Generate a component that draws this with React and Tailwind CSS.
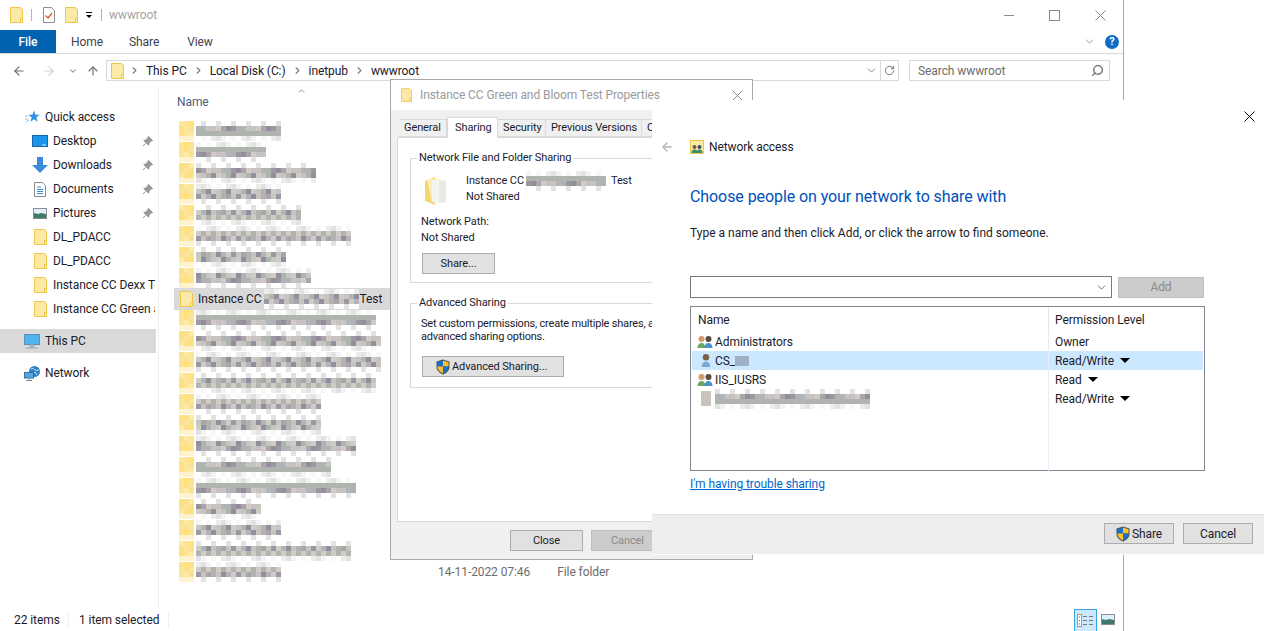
import { ChevronDown, ChevronRight, ArrowLeft, ArrowRight, ArrowUp, RotateCw, Search, ChevronUp } from 'lucide-react';

const ROWS = [
  85, 70, 120, 85, 105, 155, 90, 115, null, 180, 185, 185, 180, 125, 125, 160, 135, 160, 65, 85, 155, 85,
];
const GREYS = ['#aaa5ab', '#c6c6c0', '#9d97a3', '#d0cbc7', '#b3b3bc', '#928e9a', '#c9c1c1', '#afb4ae'];
const FRINGE = ['#f7f7f7', '#ffffff', '#ececec', '#e2e2e2', '#f3f3f6', '#ffffff'];
const YELLOWS = ['#fde9a4', '#fbe08e', '#ffe27a', '#fde597'];

// pseudo random but stable, so the blur looks the same every run
function pick(list, a, b) {
  return list[(a * 7 + b * 13 + a * b * 3) % list.length];
}

function Mosaic({ width, seed = 1, cell = 5 }) {
  const cols = Math.round(width / cell);
  const bands = [FRINGE, GREYS, GREYS, FRINGE];
  return (
    <div className="flex flex-col shrink-0">
      {bands.map((band, r) => (
        <div key={r} className="flex">
          {Array.from({ length: cols }).map((_, c) => (
            <div key={c} style={{ width: cell, height: cell, backgroundColor: pick(band, c + seed, r + seed) }} />
          ))}
        </div>
      ))}
    </div>
  );
}

function BlurFolder({ seed }) {
  return (
    <div className="flex flex-col shrink-0">
      {[0, 1, 2, 3].map((r) => (
        <div key={r} className="flex">
          {[0, 1, 2].map((c) => (
            <div key={c} style={{ width: 5, height: 5, backgroundColor: r === 3 ? '#fdf3cf' : pick(YELLOWS, c + seed, r) }} />
          ))}
        </div>
      ))}
    </div>
  );
}

function Cross({ color = '#8a8a8a' }) {
  return (
    <svg viewBox="0 0 11 11" className="w-[11px] h-[11px] shrink-0" stroke={color}>
      <path d="M.5.5l10 10M10.500.5l-10 10" />
    </svg>
  );
}

function Folder({ className = 'w-[13px] h-[16px]' }) {
  return (
    <svg viewBox="0 0 13 16" className={className}>
      <path d="M.5.5h9.500l2.500 2v13H.5z" fill="#fde9a6" stroke="#eec64a" />
      <path d="M10.500 11.500h2v4h-2z" fill="#fff3c9" stroke="#eec64a" />
    </svg>
  );
}

function Shield() {
  return (
    <svg viewBox="0 0 14 16" className="w-[14px] h-[16px] shrink-0">
      <path d="M7 .5 13.500 2.500V8c0 3.500-3 6-6.500 7.500C3.500 14 .5 11.500.5 8V2.500z" fill="#4a5560" />
      <path d="M7 1.500v6H1.500V3.200z" fill="#1673cc" />
      <path d="M7 1.500l5.500 1.700v4.300H7z" fill="#fbc02d" />
      <path d="M1.500 7.500H7v6.800C4 13 1.500 11 1.500 7.500z" fill="#fbc02d" />
      <path d="M7 7.500h5.500c0 3.500-2.500 5.500-5.500 6.800z" fill="#1673cc" />
    </svg>
  );
}

function Person({ color = '#3f7fbf', head = '#8a6a4a', x = 0 }) {
  return (
    <g transform={`translate(${x} 0)`}>
      <circle cx="4.500" cy="4" r="3" fill={head} />
      <path d="M.5 13c0-3 1.500-5 4-5s4 2 4 5z" fill={color} />
    </g>
  );
}

function UserIcon({ group }) {
  if (group) {
    return (
      <svg viewBox="0 0 17 14" className="w-[17px] h-[14px] shrink-0">
        <Person color="#6aa85f" head="#d49a6a" x={0} />
        <Person color="#4a8fd0" head="#5a4a42" x={7} />
      </svg>
    );
  }
  return (
    <svg viewBox="0 0 9 14" className="w-[10px] h-[15px] shrink-0">
      <Person color="#7ba7d4" head="#7a6048" />
    </svg>
  );
}

function Pin() {
  return (
    <svg viewBox="0 0 12 12" className="w-[11px] h-[11px]">
      <path d="M7 .5 11.500 5 9.500 5.700 7.500 8l-.3 2L2 4.800l2-.3L6.300 2.500zM4 8 1 11" fill="#9a9a9a" stroke="#8a8a8a" />
    </svg>
  );
}

function StarIcon() {
  return (
    <svg viewBox="0 0 15 14" className="w-[15px] h-[14px]">
      <path d="M9 .5l1.500 4.300h4.200l-3.400 2.600 1.300 4.400L9 9.300 5.400 11.800l1.300-4.400-3.400-2.600h4.200z" fill="#2f8fe0" />
      <path d="M0 6h3M0 9h3M1 12l3-2" stroke="#8cc4f0" />
    </svg>
  );
}

function DesktopIcon() {
  return (
    <svg viewBox="0 0 16 12" className="w-[16px] h-[12px]">
      <rect x=".5" y=".5" width="15" height="11" fill="#1a95ea" stroke="#1668a8" />
      <path d="M10 10h4" stroke="#d7eefc" />
    </svg>
  );
}

function DownloadIcon() {
  return (
    <svg viewBox="0 0 16 16" className="w-[16px] h-[16px]">
      <path d="M5 0h6v8h5l-8 8-8-8h5z" fill="#3b8ddc" />
    </svg>
  );
}

function DocIcon() {
  return (
    <svg viewBox="0 0 12 15" className="w-[12px] h-[15px]">
      <path d="M.5.5h8l3 3v11H.5z" fill="#fff" stroke="#8a8a8a" />
      <path d="M3 5h4M3 7.500h6M3 9.500h6M3 11.500h6" stroke="#3a8ad0" />
    </svg>
  );
}

function PictureIcon() {
  return (
    <svg viewBox="0 0 14 11" className="w-[14px] h-[11px]">
      <rect x=".5" y=".5" width="13" height="10" fill="#dff0fa" stroke="#8a8f96" />
      <path d="M1 5l4 1 3-1 5 1v4H1z" fill="#3d7a6a" />
    </svg>
  );
}

function PcIcon() {
  return (
    <svg viewBox="0 0 16 15" className="w-[16px] h-[15px]">
      <rect x=".5" y=".5" width="15" height="10" fill="#4fb4ef" stroke="#5a8fb8" />
      <path d="M6 11h4v2H6zM2 14h12" stroke="#8fa9bd" fill="#c7d6e0" />
    </svg>
  );
}

function NetworkIcon() {
  return (
    <svg viewBox="0 0 16 15" className="w-[16px] h-[15px]">
      <circle cx="10.500" cy="5.500" r="5.500" fill="#2f82c9" />
      <path d="M7 3c2-1 3 0 4 1s3 0 4 0M9 8l2-2 2 3" stroke="#bfe3f7" fill="none" />
      <rect x=".5" y="6.500" width="9" height="5.500" fill="#52a9e3" stroke="#34709e" />
      <path d="M5 12v2M2 14.500h6" stroke="#6f8fa8" />
    </svg>
  );
}

function TitleDoc() {
  return (
    <svg viewBox="0 0 12 16" className="w-[12px] h-[16px]">
      <path d="M.5.5h8l3 3v12H.5z" fill="#fff" stroke="#8f8f8f" />
      <path d="M2.500 8.500l2.500 2.500 4-5" stroke="#e0562a" strokeWidth="1.300" fill="none" />
    </svg>
  );
}

function DetailsViewIcon() {
  return (
    <svg viewBox="0 0 17 13" className="w-[17px] h-[13px]">
      <rect x=".5" y=".5" width="4" height="12" fill="#fff" stroke="#9a9a9a" />
      <path d="M2 3h1M2 6.500h1" stroke="#555" />
      <path d="M2 10h1" stroke="#c0392b" />
      <path d="M6 2.500h4M12 2.500h4M6 6.500h4M12 6.500h4M6 10.500h4M12 10.500h4" stroke="#777" />
    </svg>
  );
}

function SharedFolder() {
  return (
    <svg viewBox="0 0 24 30" className="w-[24px] h-[30px]">
      <path d="M1 5 11 1v28L1 25z" fill="#f7d671" />
      <path d="M3 3h14v23H8z" fill="#fdeeb7" />
      <path d="M8 4h14v23H11l-3-2z" fill="#f3f3f1" />
      <path d="M15 5h7v21h-7z" fill="#e8e8e4" />
    </svg>
  );
}

function NavItem({ icon, label, pinned, indent = 'pl-[32px]' }) {
  return (
    <div className={`h-[24px] flex items-center ${indent} pr-[3px] overflow-hidden`}>
      <span className="w-[16px] mr-[5px] flex items-center justify-center shrink-0">{icon}</span>
      <span className="flex-1 whitespace-nowrap overflow-hidden">{label}</span>
      {pinned && <span className="ml-[2px] mr-[2px] shrink-0"><Pin /></span>}
    </div>
  );
}

function Sidebar() {
  return (
    <aside className="w-[159px] shrink-0 border-r border-[#f0f0f0] pt-[17px] text-[#1b1b2b]">
      <NavItem indent="pl-[24px]" icon={<StarIcon />} label="Quick access" />
      <NavItem icon={<DesktopIcon />} label="Desktop" pinned />
      <NavItem icon={<DownloadIcon />} label="Downloads" pinned />
      <NavItem icon={<DocIcon />} label="Documents" pinned />
      <NavItem icon={<PictureIcon />} label="Pictures" pinned />
      <NavItem icon={<Folder />} label="DL_PDACC" />
      <NavItem icon={<Folder />} label="DL_PDACC" />
      <NavItem icon={<Folder />} label="Instance CC Dexx Test" />
      <NavItem icon={<Folder />} label="Instance CC Green and Bloom Test" />
      <div className="mt-[8px] w-[156px] bg-[#d9d9d9]">
        <NavItem indent="pl-[24px]" icon={<PcIcon />} label="This PC" />
      </div>
      <div className="mt-[8px]">
        <NavItem indent="pl-[24px]" icon={<NetworkIcon />} label="Network" />
      </div>
    </aside>
  );
}

function FileList() {
  return (
    <main className="flex-1 relative pl-[15px] text-[#1b1b2b]">
      <ChevronUp className="absolute left-[136px] top-[-2px] w-[13px] h-[10px] text-[#555]" strokeWidth={1.500} />
      <div className="h-[32px] pl-[3px] pt-[6px] text-[#4c607a]">Name</div>
      {ROWS.map((w, i) =>
        w === null ? (
          <div key={i} className="h-[22px] -mb-px w-[216px] bg-[#d9d9d9] flex items-center pl-[6px]">
            <Folder className="w-[13px] h-[16px] shrink-0" />
            <span className="ml-[5px]">Instance CC</span>
            <span className="ml-[2px] mr-[1px]"><Mosaic width={95} cell={5} seed={4} /></span>
            <span>Test</span>
          </div>
        ) : (
          <div key={i} className="h-[21px] flex items-center pl-[5px]">
            <BlurFolder seed={i} />
            <span className="ml-[2px]"><Mosaic width={w} seed={i + 1} /></span>
            {i === 21 && <span className="ml-[157px] text-[#6d6d6d] whitespace-nowrap">14-11-2022 07:46</span>}
            {i === 21 && <span className="ml-[27px] text-[#6d6d6d] whitespace-nowrap">File folder</span>}
          </div>
        ),
      )}
    </main>
  );
}

function Crumb({ children }) {
  return (
    <>
      <ChevronRight className="w-[11px] h-[11px] mx-[5px] text-[#7d7d7d]" strokeWidth={2.500} />
      <span className="mx-[1px] whitespace-nowrap">{children}</span>
    </>
  );
}

function Explorer() {
  return (
    <div className="w-[1124px] h-[631px] border-r border-[#a9a9a9] flex flex-col bg-white">
      <div className="h-[30px] flex items-center pl-[10px] shrink-0">
        <Folder />
        <span className="w-px h-[12px] bg-[#b5b5b5] ml-[8px] mr-[11px]" />
        <TitleDoc />
        <span className="ml-[10px]"><Folder /></span>
        <span className="ml-[8px] flex flex-col items-center gap-[2px]">
          <span className="w-[6px] h-px bg-black" />
          <span className="w-0 h-0 border-x-[3px] border-x-transparent border-t-[3px] border-t-black" />
        </span>
        <span className="w-px h-[12px] bg-[#b5b5b5] ml-[9px] mr-[7px]" />
        <span className="text-[#a3a3a3]">wwwroot</span>
        <span className="flex-1" />
        <span className="w-[10px] h-px bg-[#8a8a8a]" />
        <span className="w-[11px] h-[11px] ml-[35px] border border-[#8a8a8a]" />
        <span className="ml-[35px] mr-[17px]"><Cross /></span>
      </div>

      <div className="h-[24px] flex items-center border-b border-[#dadada] shrink-0 text-[#3f3f4f]">
        <div className="w-[56px] h-[23px] bg-[#0063b1] text-white font-medium flex items-center justify-center">File</div>
        <span className="ml-[15px]">Home</span>
        <span className="ml-[26px]">Share</span>
        <span className="ml-[28px]">View</span>
        <span className="flex-1" />
        <ChevronDown className="w-[13px] h-[13px] text-[#8a8a8a]" strokeWidth={1.500} />
        <span className="ml-[9px] mr-[4px] w-[14px] h-[14px] rounded-full bg-[#0f6cc6] text-white text-[11px] font-bold flex items-center justify-center">?</span>
      </div>

      <div className="h-[34px] flex items-start pt-[6px] shrink-0">
        <div className="h-[21px] w-[106px] flex items-center pl-[12px] shrink-0">
          <ArrowLeft className="w-[14px] h-[14px] text-[#6f6f6f]" strokeWidth={2} />
          <ArrowRight className="w-[14px] h-[14px] ml-[16px] text-[#d0d0d0]" strokeWidth={2} />
          <ChevronDown className="w-[10px] h-[10px] ml-[12px] text-[#8a8a8a]" strokeWidth={2.500} />
          <ArrowUp className="w-[14px] h-[14px] ml-[8px] text-[#6f6f6f]" strokeWidth={2} />
        </div>
        <div className="h-[21px] w-[775px] border border-[#d9d9d9] flex items-center pl-[4px] text-[#1b1b2b]">
          <Folder />
          <Crumb>This PC</Crumb>
          <Crumb>Local Disk (C:)</Crumb>
          <Crumb>inetpub</Crumb>
          <Crumb>wwwroot</Crumb>
          <span className="flex-1" />
          <ChevronDown className="w-[13px] h-[13px] mr-[2px] text-[#6f6f6f]" strokeWidth={1.500} />
        </div>
        <div className="h-[21px] w-[18px] border-y border-r border-[#d9d9d9] flex items-center justify-center">
          <RotateCw className="w-[11px] h-[11px] text-[#6f6f6f]" strokeWidth={2} />
        </div>
        <div className="h-[21px] w-[201px] ml-[10px] border border-[#d9d9d9] flex items-center pl-[8px] pr-[5px] text-[#6d6d6d]">
          <span className="flex-1">Search wwwroot</span>
          <Search className="w-[13px] h-[13px] -scale-x-100 text-[#6f6f6f]" strokeWidth={2.500} />
        </div>
      </div>

      <div className="flex-1 flex min-h-0">
        <Sidebar />
        <FileList />
      </div>

      <div className="h-[23px] shrink-0 flex items-center pl-[14px] text-[#1b1b2b]">
        <span className="w-[54px]">22 items</span>
        <span className="w-px h-[16px] bg-[#f0f0f0]" />
        <span className="w-[99px] pl-[10px] whitespace-nowrap">1 item selected</span>
        <span className="w-px h-[16px] bg-[#f0f0f0]" />
        <span className="flex-1" />
        <span className="w-[23px] h-[22px] mt-[1px] border border-b-0 border-[#3aa0e0] bg-[#cce8ff] flex items-center justify-center">
          <DetailsViewIcon />
        </span>
        <span className="ml-[4px] mr-[8px]"><PictureIcon /></span>
      </div>
    </div>
  );
}

function Btn({ children, disabled, className = '' }) {
  return (
    <div
      className={`h-[21px] flex items-center justify-center border ${
        disabled ? 'bg-[#cccccc] border-[#bfbfbf] text-[#8a8a8a]' : 'bg-[#e1e1e1] border-[#adadad] text-[#1b1b2b]'
      } ${className}`}
    >
      {children}
    </div>
  );
}

function Tab({ children, active, className = '' }) {
  return (
    <div
      className={`border border-[#d9d9d9] flex items-center pl-[5px] whitespace-nowrap ${
        active ? 'h-[21px] bg-white border-b-white -mb-px relative pl-[7px]' : 'h-[18px] bg-[#f0f0f0] border-l-0'
      } ${className}`}
    >
      {children}
    </div>
  );
}

function Properties() {
  return (
    <div className="absolute left-[390px] top-[79px] w-[363px] h-[481px] border border-[#a9a9a9] bg-[#f0f0f0] flex flex-col text-[#1b1b2b]">
      <div className="h-[30px] bg-white flex items-center pl-[10px] text-[#9a9a9a] shrink-0">
        <Folder className="w-[11px] h-[14px]" />
        <span className="ml-[8px] flex-1">Instance CC Green and Bloom Test Properties</span>
        <span className="mr-[9px]"><Cross /></span>
      </div>
      <div className="flex flex-col flex-1 text-[11px] tracking-[-0.1px]">
        <div className="flex items-end pl-[8px] pt-[7px] h-[27px] shrink-0">
          <Tab className="w-[48px] border-l">General</Tab>
          <Tab active className="w-[51px]">Sharing</Tab>
          <Tab className="w-[48px]">Security</Tab>
          <Tab className="w-[96px]">Previous Versions</Tab>
          <Tab className="w-[80px]">Customize</Tab>
        </div>
        <div className="mx-[6px] h-[385px] bg-white border border-[#d9d9d9] px-[12px] pt-[12px]">
          <fieldset className="border border-[#d9d9d9] h-[133px] pl-[10px]">
            <legend className="px-[2px] -ml-[4px]">Network File and Folder Sharing</legend>
            <div className="flex mt-[7px] ml-[3px]">
              <div className="mt-[3px]"><SharedFolder /></div>
              <div className="ml-[18px]">
                <div className="flex items-center h-[16px]">
                  Instance CC
                  <span className="ml-[2px] mr-[5px]"><Mosaic width={80} cell={5} seed={2} /></span>
                  Test
                </div>
                <div className="leading-[15px]">Not Shared</div>
              </div>
            </div>
            <div className="mt-[8px]">Network Path:</div>
            <div>Not Shared</div>
            <Btn className="w-[73px] mt-[7px] ml-[1px]">Share...</Btn>
          </fieldset>
          <fieldset className="border border-[#d9d9d9] h-[93px] pl-[10px] mt-[12px]">
            <legend className="px-[2px] -ml-[4px]">Advanced Sharing</legend>
            <p className="mt-[6px] leading-[13px] whitespace-nowrap tracking-[-0.2px]">
              Set custom permissions, create multiple shares, and set other
              <br />
              advanced sharing options.
            </p>
            <Btn className="w-[142px] mt-[13px] ml-[1px] justify-start pl-[13px]">
              <Shield />
              <span className="ml-[2px]">Advanced Sharing...</span>
            </Btn>
          </fieldset>
        </div>
        <div className="flex pl-[119px] pt-[8px] gap-[8px]">
          <Btn className="w-[73px]">Close</Btn>
          <Btn disabled className="w-[73px]">Cancel</Btn>
        </div>
      </div>
    </div>
  );
}

function UserRow({ icon, name, level, selected }) {
  return (
    <div className={`h-[19px] flex items-center ${selected ? 'bg-[#cce8ff]' : ''}`}>
      <div className="w-[356px] flex items-center pl-[5px] shrink-0">
        <span className="w-[17px] flex justify-center shrink-0">{icon}</span>
        <span className="ml-[1px] flex items-center">{name}</span>
      </div>
      <div className="flex-1 h-full border-l border-[#e5eef8] pl-[6px] flex items-center">
        {level}
        {level !== 'Owner' && (
          <span className="ml-[6px] w-0 h-0 border-x-[5px] border-x-transparent border-t-[5px] border-t-black" />
        )}
      </div>
    </div>
  );
}

function BlurUser() {
  return <span className="w-[10px] h-[15px] bg-[#c9c3be]" />;
}

function NetworkAccess() {
  return (
    <div className="absolute left-[652px] top-[100px] w-[612px] h-[455px] bg-white flex flex-col text-[#1b1b2b]">
      <div className="h-[84px] relative shrink-0">
        <div className="absolute right-[9px] top-[11px]"><Cross color="#000" /></div>
        <div className="flex items-center pt-[39px] pl-[8px]">
          <ArrowLeft className="w-[14px] h-[14px] text-[#b8b8b8]" strokeWidth={2.500} />
          <svg viewBox="0 0 14 14" className="w-[14px] h-[14px] ml-[16px]">
            <rect x=".5" y=".5" width="13" height="13" fill="#fde9a6" stroke="#eec64a" />
            <circle cx="4.500" cy="7" r="2" fill="#6a5a4a" />
            <circle cx="9.500" cy="7" r="2" fill="#3a4a5a" />
            <path d="M1.500 13c0-2.500 1-3.500 3-3.500s3 1 3 3.500zM6.500 13c0-2.500 1-3.500 3-3.500s3 1 3 3.500z" fill="#3f8f6a" />
          </svg>
          <span className="ml-[5px]">Network access</span>
        </div>
      </div>
      <h1 className="pl-[38px] text-[16px] leading-[26px] text-[#0050b8] font-normal">Choose people on your network to share with</h1>
      <p className="pl-[38px] mt-[14px] leading-[18px] tracking-normal">Type a name and then click Add, or click the arrow to find someone.</p>
      <div className="flex pl-[38px] mt-[34px] items-center">
        <div className="w-[422px] h-[22px] border border-[#7a7a7a] flex items-center justify-end pr-[3px]">
          <ChevronDown className="w-[13px] h-[13px] text-[#555]" strokeWidth={1.500} />
        </div>
        <Btn disabled className="w-[86px] ml-[6px]">Add</Btn>
      </div>
      <div className="ml-[38px] mt-[8px] w-[515px] h-[165px] border border-[#828790] p-px">
        <div className="h-[24px] flex items-center">
          <span className="w-[356px] pl-[6px] shrink-0">Name</span>
          <span className="flex-1 h-full border-l border-[#e5e5e5] pl-[6px] flex items-center">Permission Level</span>
        </div>
        <UserRow icon={<UserIcon group />} name="Administrators" level="Owner" />
        <UserRow
          icon={<UserIcon />}
          name={
            <>
              CS_
              <span className="w-[14px] h-[10px] bg-[#9fb0c4]" />
            </>
          }
          level="Read/Write"
          selected
        />
        <UserRow icon={<UserIcon group />} name="IIS_IUSRS" level="Read" />
        <UserRow
          icon={<BlurUser />}
          name={<Mosaic width={155} cell={5} seed={9} />}
          level="Read/Write"
        />
        <div className="h-[63px] ml-[356px] border-l border-[#e5eef8]" />
      </div>
      <a className="pl-[38px] mt-[4px] leading-[18px] text-[#0066cc] underline">I'm having trouble sharing</a>
      <div className="flex-1" />
      <div className="h-[41px] bg-[#eeeeee] border-t border-[#e0e0e0] border-b border-b-white flex items-center justify-end gap-[9px] pr-[11px] pb-[2px] shrink-0">
        <Btn className="w-[70px]">
          <Shield />
          <span className="ml-[2px]">Share</span>
        </Btn>
        <Btn className="w-[70px]">Cancel</Btn>
      </div>
    </div>
  );
}

export default function App() {
  return (
    <div className="relative w-[1269px] h-[631px] overflow-hidden bg-white text-[12px] leading-[16px] tracking-[-0.08px] font-['Roboto',sans-serif]">
      <Explorer />
      <Properties />
      <NetworkAccess />
    </div>
  );
}
